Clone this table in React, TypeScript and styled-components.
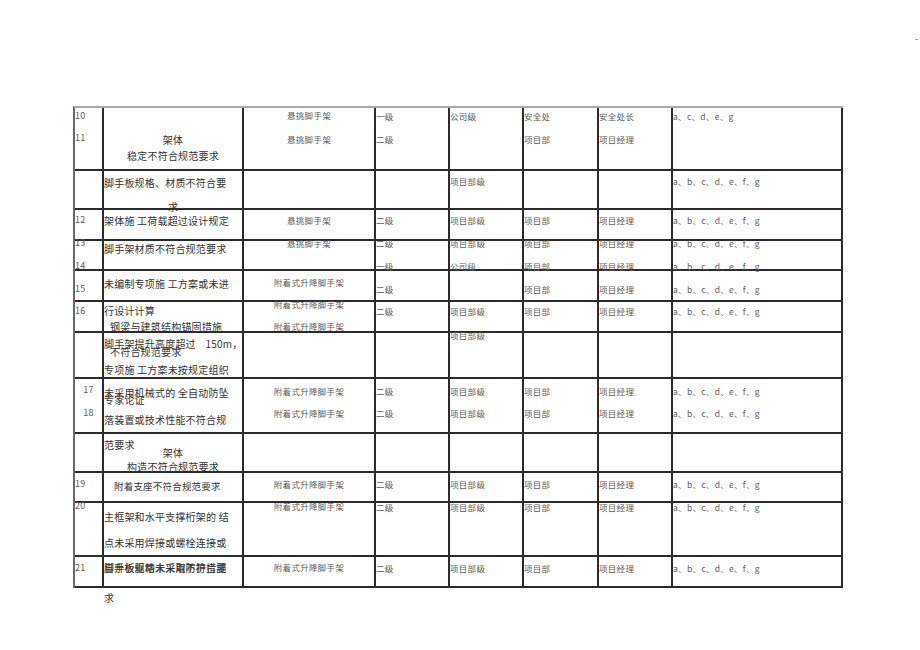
import styled, { createGlobalStyle } from "styled-components";

const GlobalStyle = createGlobalStyle`
  html, body {
    margin: 0;
    padding: 0;
    background: #ffffff;
  }
  body {
    font-family: "Noto Sans CJK SC", "Noto Sans", sans-serif;
  }
`;

// horizontal grid lines (top edge of each 2px rule) and column widths
const ROW_LINES = [106, 169, 208, 239, 269, 300, 331, 377, 432, 471, 501, 555, 586];
const COL_WIDTHS = [29, 140, 132, 74, 74, 75, 74, 170];
const LINE_H = 12;

type Line = { t: string; y: number; a?: "c"; i?: number; s?: number };
type Row = Record<number, Line[]>;

const ABC = "a、b、c、d、e、f、g";
const HANG = "悬挑脚手架";
const LIFT = "附着式升降脚手架";

const plain = (y: number): Row => ({
  3: [{ t: "二级", y }],
  4: [{ t: "项目部级", y }],
  5: [{ t: "项目部", y }],
  6: [{ t: "项目经理", y }],
  7: [{ t: ABC, y }],
});

const rows: Row[] = [
  {
    0: [{ t: "10", y: 116 }, { t: "11", y: 138 }],
    1: [
      { t: "架体", y: 140, a: "c" },
      { t: "稳定不符合规范要求", y: 156, a: "c" },
    ],
    2: [{ t: HANG, y: 115, a: "c" }, { t: HANG, y: 139, a: "c" }],
    3: [{ t: "一级", y: 116 }, { t: "二级", y: 139 }],
    4: [{ t: "公司级", y: 116 }],
    5: [{ t: "安全处", y: 116 }, { t: "项目部", y: 139 }],
    6: [{ t: "安全处长", y: 116 }, { t: "项目经理", y: 139 }],
    7: [{ t: "a、c、d、e、g", y: 116 }],
  },
  {
    1: [
      { t: "脚手板规格、材质不符合要", y: 183 },
      { t: "求", y: 207, a: "c" },
    ],
    4: [{ t: "项目部级", y: 181 }],
    7: [{ t: ABC, y: 181 }],
  },
  {
    ...plain(220),
    0: [{ t: "12", y: 220 }],
    1: [{ t: "架体施 工荷载超过设计规定", y: 221 }],
    2: [{ t: HANG, y: 220, a: "c" }],
  },
  {
    0: [{ t: "13", y: 243 }, { t: "14", y: 266 }],
    1: [{ t: "脚手架材质不符合规范要求", y: 249 }],
    2: [{ t: HANG, y: 243, a: "c" }],
    3: [{ t: "二级", y: 243 }, { t: "一级", y: 266 }],
    4: [{ t: "项目部级", y: 243 }, { t: "公司级", y: 266 }],
    5: [{ t: "项目部", y: 243 }, { t: "项目部", y: 266 }],
    6: [{ t: "项目经理", y: 243 }, { t: "项目经理", y: 266 }],
    7: [{ t: ABC, y: 243 }, { t: ABC, y: 266 }],
  },
  {
    ...plain(289),
    0: [{ t: "15", y: 289 }],
    1: [{ t: "未编制专项施 工方案或未进", y: 284 }],
    2: [{ t: LIFT, y: 282, a: "c" }],
    4: [],
  },
  {
    ...plain(311),
    0: [{ t: "16", y: 311 }],
    1: [
      { t: "行设计计算", y: 311 },
      { t: "钢梁与建筑结构锚固措施", y: 327, i: 6 },
    ],
    2: [{ t: LIFT, y: 304, a: "c" }, { t: LIFT, y: 326, a: "c" }],
  },
  {
    1: [
      { t: "脚手架提升高度超过    150m，", y: 344 },
      { t: "不符合规范要求", y: 352, i: 6 },
      { t: "专项施 工方案未按规定组织", y: 370 },
    ],
    4: [{ t: "项目部级", y: 335 }],
  },
  {
    0: [{ t: "17", y: 390, a: "c" }, { t: "18", y: 413, a: "c" }],
    1: [
      { t: "未采用机械式的 全自动防坠", y: 393 },
      { t: "专家论证", y: 400 },
      { t: "落装置或技术性能不符合规", y: 420 },
    ],
    2: [{ t: LIFT, y: 391, a: "c" }, { t: LIFT, y: 413, a: "c" }],
    3: [{ t: "二级", y: 391 }, { t: "二级", y: 413 }],
    4: [{ t: "项目部级", y: 391 }, { t: "项目部级", y: 413 }],
    5: [{ t: "项目部", y: 391 }, { t: "项目部", y: 413 }],
    6: [{ t: "项目经理", y: 391 }, { t: "项目经理", y: 413 }],
    7: [{ t: ABC, y: 391 }, { t: ABC, y: 413 }],
  },
  {
    1: [
      { t: "范要求", y: 445 },
      { t: "架体", y: 453, a: "c" },
      { t: "构造不符合规范要求", y: 467, a: "c" },
    ],
  },
  {
    ...plain(484),
    0: [{ t: "19", y: 484 }],
    1: [{ t: "附着支座不符合规范要求", y: 486, i: 10, s: 9.5 }],
    2: [{ t: LIFT, y: 484, a: "c" }],
  },
  {
    ...plain(507),
    0: [{ t: "20", y: 506 }],
    1: [
      { t: "主框架和水平支撑桁架的 结", y: 517 },
      { t: "点未采用焊接或螺栓连接或", y: 543 },
    ],
    2: [{ t: LIFT, y: 506, a: "c" }],
  },
  {
    ...plain(568),
    0: [{ t: "21", y: 568 }],
    1: [
      { t: "脚手板规格未采用不符合要", y: 568 },
      { t: "自升板驱动未采取防护措施", y: 568 },
    ],
    2: [{ t: LIFT, y: 567, a: "c" }],
  },
];

const Page = styled.div`
  width: 920px;
  height: 650px;
  display: flex;
  flex-direction: column;
  overflow: hidden;
`;

const Header = styled.div`
  height: 106px;
  display: flex;
  justify-content: flex-end;
  align-items: flex-start;
`;

const Mark = styled.span`
  margin: 33px 2px 0 0;
  font-size: 9px;
  line-height: 12px;
  color: #555;
`;

const Sheet = styled.div`
  margin-left: 73px;
  width: 768px;
  display: grid;
  grid-template-columns: ${COL_WIDTHS.map((w) => `${w}px`).join(" ")};
  grid-template-rows: ${ROW_LINES.slice(1)
    .map((y, i) => `${y - ROW_LINES[i]}px`)
    .join(" ")};
  border-top: 2px solid #a8a8a8;
  border-left: 2px solid #6a6a6a;
`;

const Cell = styled.div<{ $col: number }>`
  display: flex;
  flex-direction: column;
  min-width: 0;
  border-right: 2px solid #2b2b2b;
  border-bottom: 2px solid #2b2b2b;
  color: ${(p) => (p.$col === 1 ? "#333" : "#5c5c5c")};
  font-size: ${(p) => (p.$col === 0 ? 9 : p.$col === 1 ? 10 : 8.5)}px;
  letter-spacing: ${(p) => (p.$col === 1 ? 0.2 : 0.3)}px;
`;

const Text = styled.span<{ $mt: number; $center?: boolean; $indent: number; $size?: number }>`
  display: block;
  height: ${LINE_H}px;
  line-height: ${LINE_H}px;
  margin-top: ${(p) => p.$mt}px;
  padding-left: ${(p) => p.$indent}px;
  text-align: ${(p) => (p.$center ? "center" : "left")};
  white-space: pre;
  ${(p) => (p.$size ? `font-size: ${p.$size}px;` : "")}
`;

const Footnote = styled.div`
  margin: 4px 0 0 104px;
  font-size: 10px;
  line-height: 12px;
  color: #333;
`;

function CellLines({ list, top }: { list: Line[]; top: number }) {
  let prev = top;
  return (
    <>
      {list.map((l, k) => {
        const mt = l.y - LINE_H / 2 - prev;
        prev = l.y + LINE_H / 2;
        return (
          <Text key={k} $mt={mt} $center={l.a === "c"} $indent={l.i ?? 0} $size={l.s}>
            {l.t}
          </Text>
        );
      })}
    </>
  );
}

export default function App() {
  return (
    <Page>
      <GlobalStyle />
      <Header>
        <Mark>-</Mark>
      </Header>
      <Sheet>
        {rows.map((row, r) =>
          COL_WIDTHS.map((_, c) => (
            <Cell key={`${r}-${c}`} $col={c}>
              <CellLines list={row[c] ?? []} top={ROW_LINES[r] + 2} />
            </Cell>
          ))
        )}
      </Sheet>
      <Footnote>求</Footnote>
    </Page>
  );
}
